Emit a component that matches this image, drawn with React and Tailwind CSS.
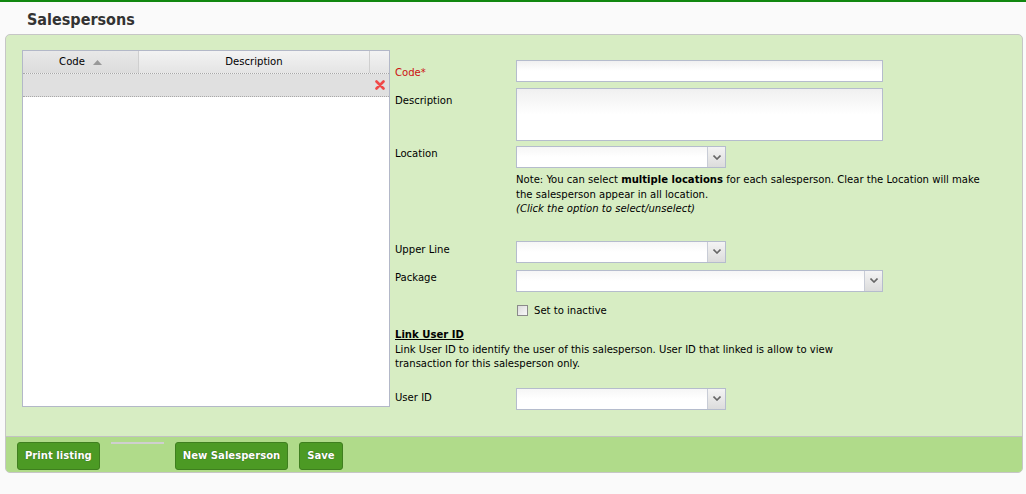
import React from "react";

const font = { fontFamily: '"DejaVu Sans Condensed", "DejaVu Sans", sans-serif' };

function SelectBox({ width }) {
  return (
    <div
      className={`flex h-[22px] ${width} border border-[#b5bccd] bg-gradient-to-b from-[#f6f6f6] via-white to-white`}
    >
      <div className="flex-1" />
      <div className="flex w-[18px] items-center justify-center border-l border-[#c8ccd6] bg-gradient-to-b from-[#f4f4f4] to-[#dcdcdc]">
        <svg width="8" height="5" viewBox="0 0 8 5">
          <path d="M0.5 0.5 L4 4 L7.5 0.5" fill="none" stroke="#666" strokeWidth="1.6" />
        </svg>
      </div>
    </div>
  );
}

function Row({ label, red, pad = "pt-[6px]", children, className = "" }) {
  return (
    <div className={`flex ${className}`}>
      <div className={`w-[121px] shrink-0 leading-[14px] ${pad} ${red ? "text-[#cc1111]" : "text-black"}`}>{label}</div>
      <div>{children}</div>
    </div>
  );
}

function GreenButton({ children }) {
  return (
    <button className="h-[28px] rounded-[3px] border border-[#3f7f1f] bg-[#4c9a24] px-[7px] text-[11.2px] font-bold text-white [text-shadow:0_0_1px_#1d4a0a]">
      {children}
    </button>
  );
}

export default function App() {
  return (
    <div className="min-h-[494px] w-[1026px] bg-[#fafafa] text-[11.2px] text-black" style={font}>
      <div className="h-[2px] bg-[#11870f]" />
      <div className="px-[27px] pt-[9px] text-[16px] font-bold leading-[18px] text-[#333]">Salespersons</div>
      <div className="mx-[5px] mt-[5px] w-[1018px] overflow-hidden rounded-[5px] border border-[#c6c6c6] bg-[#d7edc3]">
        <div className="flex h-[401px] pl-[16px] pt-[15px]">
          {/* grid */}
          <div className="h-[357px] w-[368px] shrink-0 border border-[#b3b8c8] bg-white">
            <div className="flex h-[23px] border-b border-dotted border-[#a8a8a8] bg-gradient-to-b from-[#f3f3f3] to-[#e4e4e4]">
              <div className="flex w-[116px] items-center justify-center gap-[8px] border-r border-[#cfcfcf] bg-gradient-to-b from-[#e8e8e8] to-[#dcdcdc]">
                <span>Code</span>
                <svg width="9" height="5" viewBox="0 0 9 5">
                  <path d="M0 5 L4.5 0 L9 5 Z" fill="#999" />
                </svg>
              </div>
              <div className="flex w-[231px] items-center justify-center border-r border-[#cfcfcf]">Description</div>
              <div className="flex-1" />
            </div>
            <div className="flex h-[23px] items-center justify-end border-b border-dotted border-[#a8a8a8] bg-[#e0e0e0] pr-[4px]">
              <svg width="10" height="10" viewBox="0 0 10 10">
                <path d="M1.5 1.5 L8.5 8.5 M8.5 1.5 L1.5 8.5" stroke="#f04848" strokeWidth="2.6" strokeLinecap="round" />
              </svg>
            </div>
          </div>
          {/* form */}
          <div className="ml-[5px] flex flex-col pt-[10px]">
            <Row label="Code*" red>
              <div className="h-[22px] w-[367px] border border-[#b5bccd] bg-gradient-to-b from-[#f0f0f0] via-white to-white" />
            </Row>
            <Row label="Description" className="mt-[6px]">
              <div className="h-[53px] w-[367px] border border-[#b5bccd] bg-gradient-to-b from-[#f0f0f0] via-white to-white" />
            </Row>
            <Row label="Location" pad="pt-[1px]" className="mt-[5px]">
              <SelectBox width="w-[210px]" />
              <div className="mt-[5px] w-[476px] leading-[14.5px]">
                Note: You can select <b>multiple locations</b> for each salesperson. Clear the Location will make the
                salesperson appear in all location.
                <br />
                <i>(Click the option to select/unselect)</i>
              </div>
            </Row>
            <Row label="Upper Line" pad="pt-[2px]" className="mt-[24px]">
              <SelectBox width="w-[210px]" />
            </Row>
            <Row label="Package" pad="pt-[1px]" className="mt-[7px]">
              <SelectBox width="w-[367px]" />
            </Row>
            <div className="mt-[12px] flex h-[14px] items-center pl-[122px] leading-[14px]">
              <div className="h-[11px] w-[11px] border border-[#8a8a8a] bg-gradient-to-br from-[#dcdcdc] to-[#f8f8f8]" />
              <span className="ml-[6px]">Set to inactive</span>
            </div>
            <div className="mt-[10px] font-bold leading-[14px] underline">Link User ID</div>
            <div className="mt-[1px] w-[470px] leading-[14.5px]">
              Link User ID to identify the user of this salesperson. User ID that linked is allow to view transaction
              for this salesperson only.
            </div>
            <Row label="User ID" pad="pt-[3px]" className="mt-[16px]">
              <SelectBox width="w-[210px]" />
            </Row>
          </div>
        </div>
        <div className="flex h-[36px] items-start gap-[11px] border-t border-[#c2c2c2] bg-[#b0db8a] pl-[11px] pt-[5px]">
          <GreenButton>Print listing</GreenButton>
          <div className="h-[2px] w-[53px] bg-[#cfcfcf]" />
          <GreenButton>New Salesperson</GreenButton>
          <GreenButton>Save</GreenButton>
        </div>
      </div>
    </div>
  );
}
